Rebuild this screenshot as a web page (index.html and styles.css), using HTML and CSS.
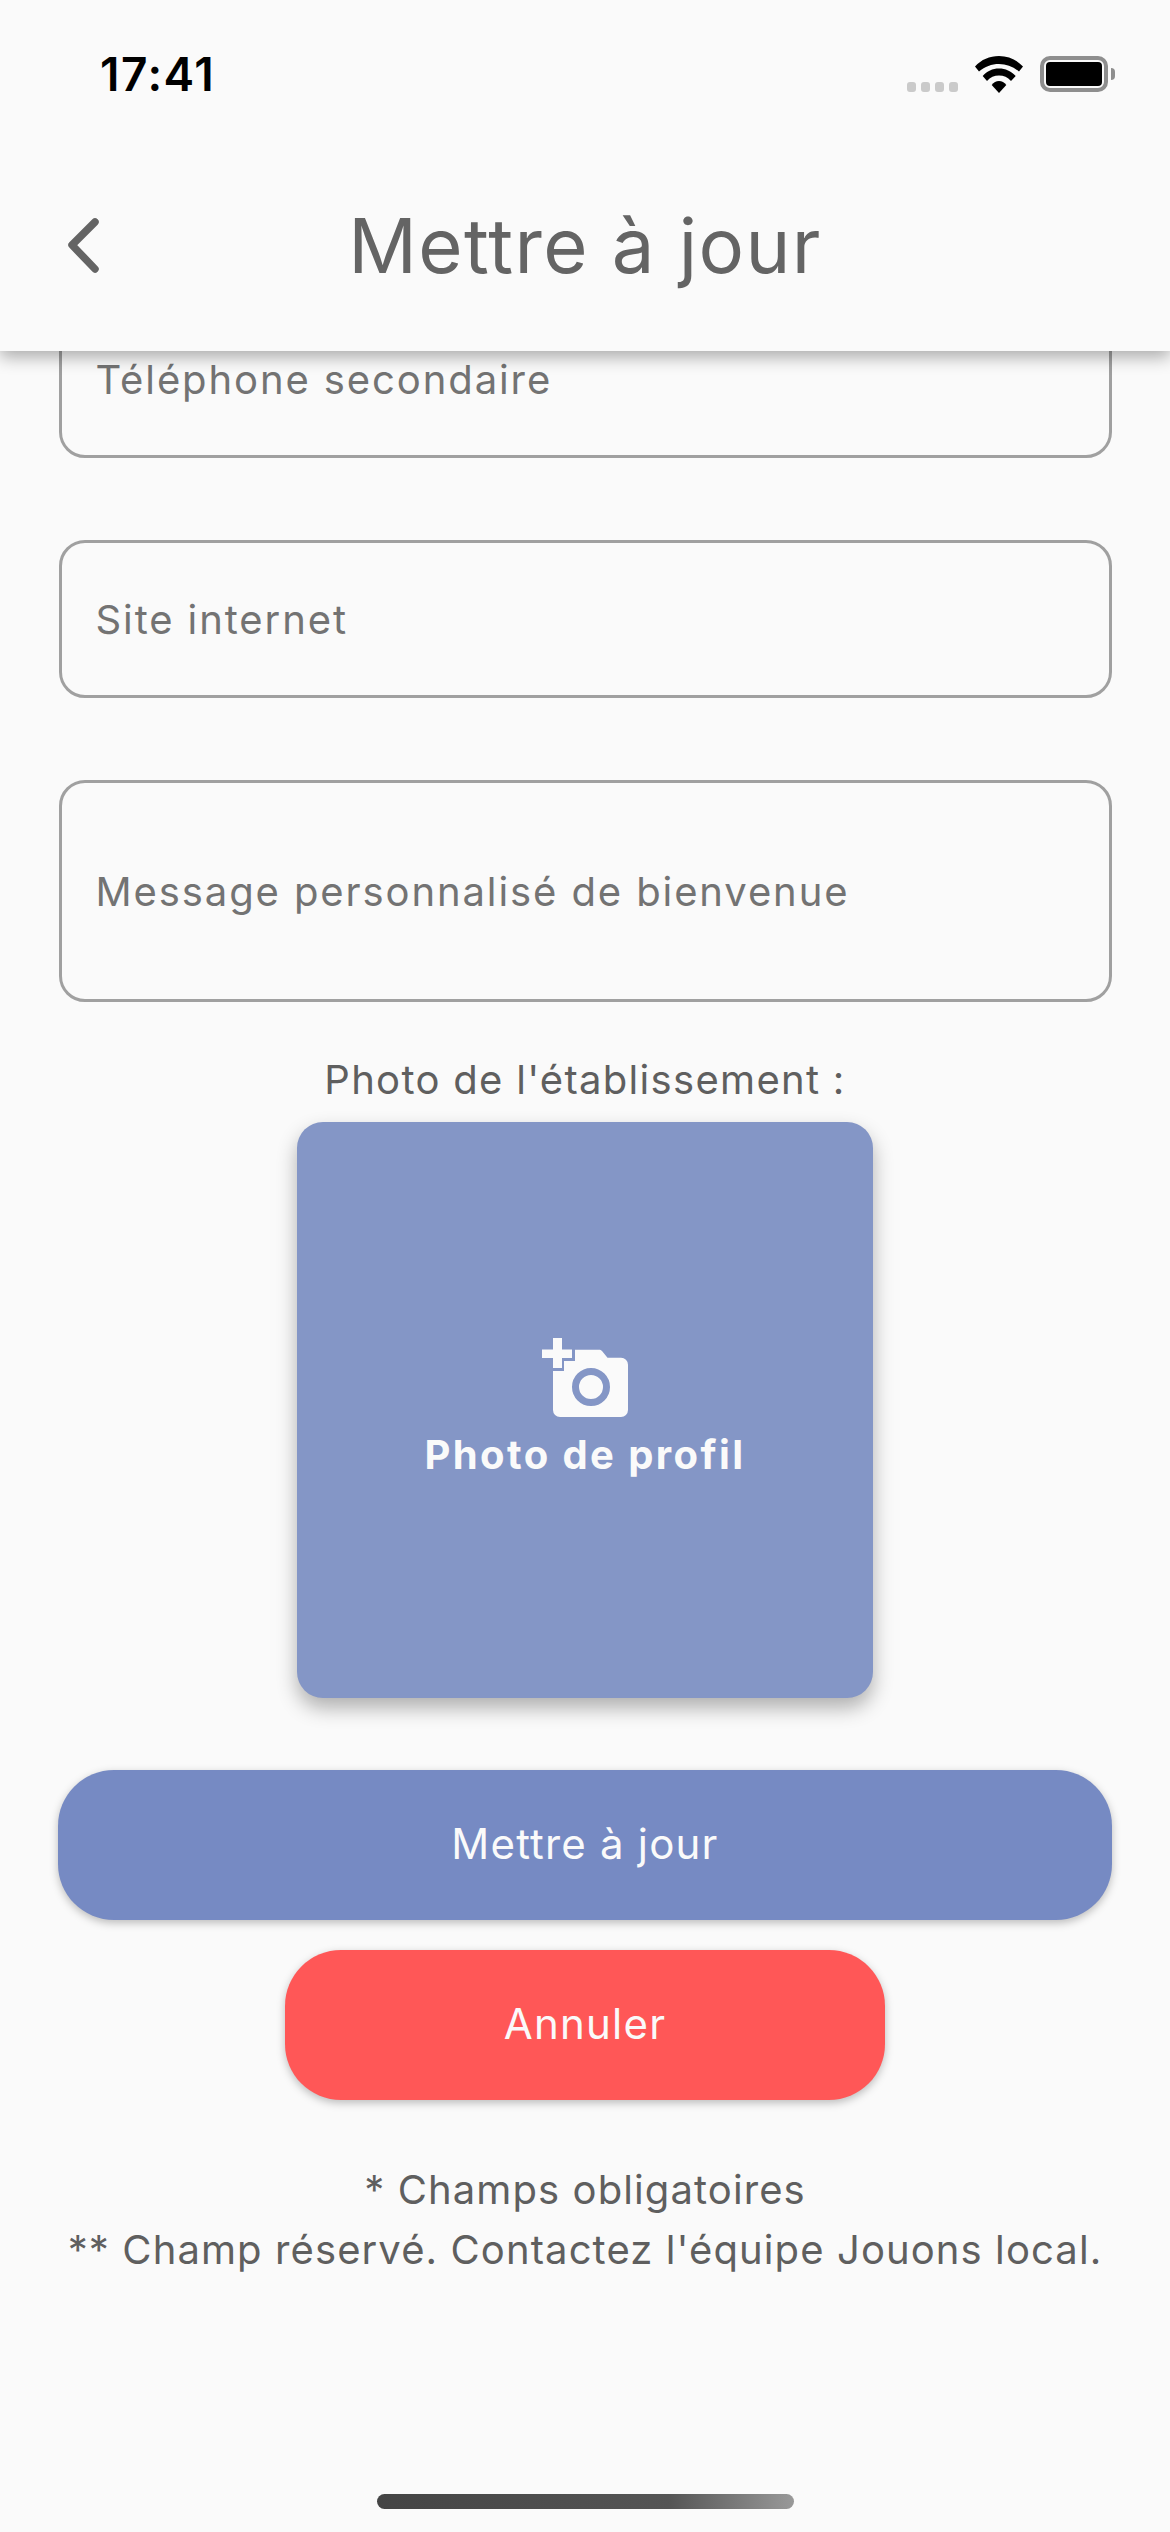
FILE: index.html
```html
<!DOCTYPE html>
<html lang="fr">

<head>
    <title>Mettre à jour</title>
    <meta charset="UTF-8">
    <link rel="stylesheet" href="styles.css">
</head>

<body>
    <div id="screen">
        <header id="topbar">
            <div class="statusbar">
                <span class="clock">17:41</span>
                <div class="statusicons">
                    <div class="signal"><i></i><i></i><i></i><i></i></div>
                    <svg class="wifi" viewBox="0 0 48 37" width="48" height="37">
                        <path d="M0 10.500C6.500 3.500 14.500 0 24 0s17.500 3.500 24 10.500l-4 5C38 10.500 31.500 8 24 8S10 10.500 4 15.500z" />
                        <path d="M7.700 20C12 15 17.500 12.500 24 12.500S36 15 40.700 20L36 25c-3.300-3.700-7.300-5.500-12-5.500S15.300 21.300 12 25z" />
                        <path d="M16.700 29c2-2.600 4.400-4 7.300-4s5.300 1.400 7.300 4L24 37z" />
                    </svg>
                    <div class="battery"><div class="batteryfill"></div></div>
                    <div class="batterytip"></div>
                </div>
            </div>
            <div class="navbar">
                <svg class="backicon" viewBox="0 0 36 60" width="36" height="60">
                    <path d="M29 7L6 30l23 24" />
                </svg>
                <h1 class="pagetitle">Mettre à jour</h1>
            </div>
        </header>

        <main id="form">
            <div class="field">Téléphone secondaire</div>
            <div class="field">Site internet</div>
            <div class="field tall">Message personnalisé de bienvenue</div>

            <div class="photolabel">Photo de l'établissement :</div>
            <div class="photobox">
                <svg class="photoicon" viewBox="0 0 86 79" width="86" height="79">
                    <path d="M11 0h9v11.500h10v8.500H20v10h-9V20H0v-8.500h11z" />
                    <path d="M33 11.700h24c1.200 0 2.200.500 3 1.300l5.500 6.700H79a7 7 0 0 1 7 7V72a7 7 0 0 1-7 7H18a7 7 0 0 1-7-7V33h11V23h11z" />
                    <circle class="photolens" cx="49" cy="49" r="15.500" />
                </svg>
                <span class="phototext">Photo de profil</span>
            </div>

            <button class="btn primary">Mettre à jour</button>
            <button class="btn cancel">Annuler</button>

            <p class="notes">* Champs obligatoires<br>** Champ réservé. Contactez l'équipe Jouons local.</p>
        </main>

        <div class="homebar"></div>
    </div>
</body>

</html>
```

FILE: styles.css
```css
* {
    box-sizing: border-box;
    padding: 0;
    margin: 0;
}

body {
    width: 1170px;
    height: 2532px;
    overflow: hidden;
    background: #fafafa;
    font-family: 'Inter', sans-serif;
}

#screen {
    display: flex;
    flex-direction: column;
    height: 2532px;
    overflow: hidden;
}

#topbar {
    position: relative;
    z-index: 2;
    height: 351px;
    flex: none;
    background: #fafafa;
    box-shadow: 0 6px 16px rgba(0, 0, 0, 0.32);
}

.statusbar {
    display: flex;
    justify-content: space-between;
    align-items: center;
    height: 111px;
    padding: 37px 0 0 100px;
}

.clock {
    font-family: 'Inter', sans-serif;
    font-weight: 600;
    font-size: 46px;
    letter-spacing: 1.500px;
    color: #000;
}

.statusicons {
    display: flex;
    align-items: center;
    padding-right: 55px;
}

.signal {
    display: flex;
    gap: 5px;
    margin: 26px 17px 0 0;
}

.signal i {
    width: 9px;
    height: 10px;
    border-radius: 3px;
    background: #cacaca;
}

.wifi {
    fill: #000;
    margin-right: 17px;
}

.battery {
    width: 68px;
    height: 36px;
    padding: 2px;
    border: 4px solid #8e8e8e;
    border-radius: 10px;
}

.batteryfill {
    height: 100%;
    background: #000;
    border-radius: 4px;
}

.batterytip {
    width: 4px;
    height: 12px;
    margin-left: 3px;
    background: #8e8e8e;
    border-radius: 0 5px 5px 0;
}

.navbar {
    display: flex;
    align-items: center;
    justify-content: center;
    position: relative;
    height: 128px;
    margin-top: 70px;
}

.backicon {
    position: absolute;
    left: 66px;
    top: 34px;
    fill: none;
    stroke: #646464;
    stroke-width: 7.500;
    stroke-linecap: round;
    stroke-linejoin: round;
}

.pagetitle {
    font-family: 'Inter', sans-serif;
    font-weight: 400;
    font-size: 76px;
    letter-spacing: 1.400px;
    color: #646464;
}

#form {
    display: flex;
    flex-direction: column;
    align-items: center;
    margin-top: -51px;
    padding: 0 58px;
}

.field {
    display: flex;
    align-items: center;
    flex: none;
    width: 1053px;
    height: 158px;
    margin-bottom: 82px;
    padding-left: 34px;
    border: 3px solid #a0a0a0;
    border-radius: 26px;
    font-size: 40px;
    letter-spacing: 1.900px;
    color: #737373;
}

.field.tall {
    height: 222px;
    margin-bottom: 0;
}

.photolabel {
    margin-top: 54px;
    line-height: 48px;
    font-size: 40px;
    letter-spacing: 1.300px;
    color: #5f5f5f;
}

.photobox {
    display: flex;
    flex-direction: column;
    align-items: center;
    flex: none;
    width: 576px;
    height: 576px;
    margin-top: 18px;
    padding-top: 216px;
    background: #8496c6;
    border-radius: 26px;
    box-shadow: 0 10px 20px rgba(0, 0, 0, 0.3);
}

.photoicon {
    fill: #fafafa;
}

.photolens {
    stroke: #8496c6;
    stroke-width: 7;
}

.phototext {
    margin-top: 14px;
    line-height: 48px;
    font-weight: 700;
    font-size: 40px;
    letter-spacing: 2.400px;
    color: #fafafa;
}

.btn {
    display: block;
    flex: none;
    height: 150px;
    padding-bottom: 3px;
    border: none;
    border-radius: 56px;
    font-family: 'Inter', sans-serif;
    font-size: 42px;
    letter-spacing: 1.200px;
    color: #fafafa;
    box-shadow: 0 3px 8px rgba(0, 0, 0, 0.25);
}

.primary {
    width: 1054px;
    margin-top: 72px;
    background: #768ac3;
}

.cancel {
    width: 600px;
    margin-top: 30px;
    background: #ff5757;
}

.notes {
    margin-top: 60px;
    line-height: 60px;
    text-align: center;
    white-space: nowrap;
    font-size: 40px;
    letter-spacing: 1.100px;
    color: #5f5f5f;
}

.homebar {
    position: absolute;
    left: 377px;
    top: 2494px;
    width: 417px;
    height: 15px;
    border-radius: 8px;
    background: linear-gradient(to right, #444 0%, #555 70%, #999 100%);
}
```
